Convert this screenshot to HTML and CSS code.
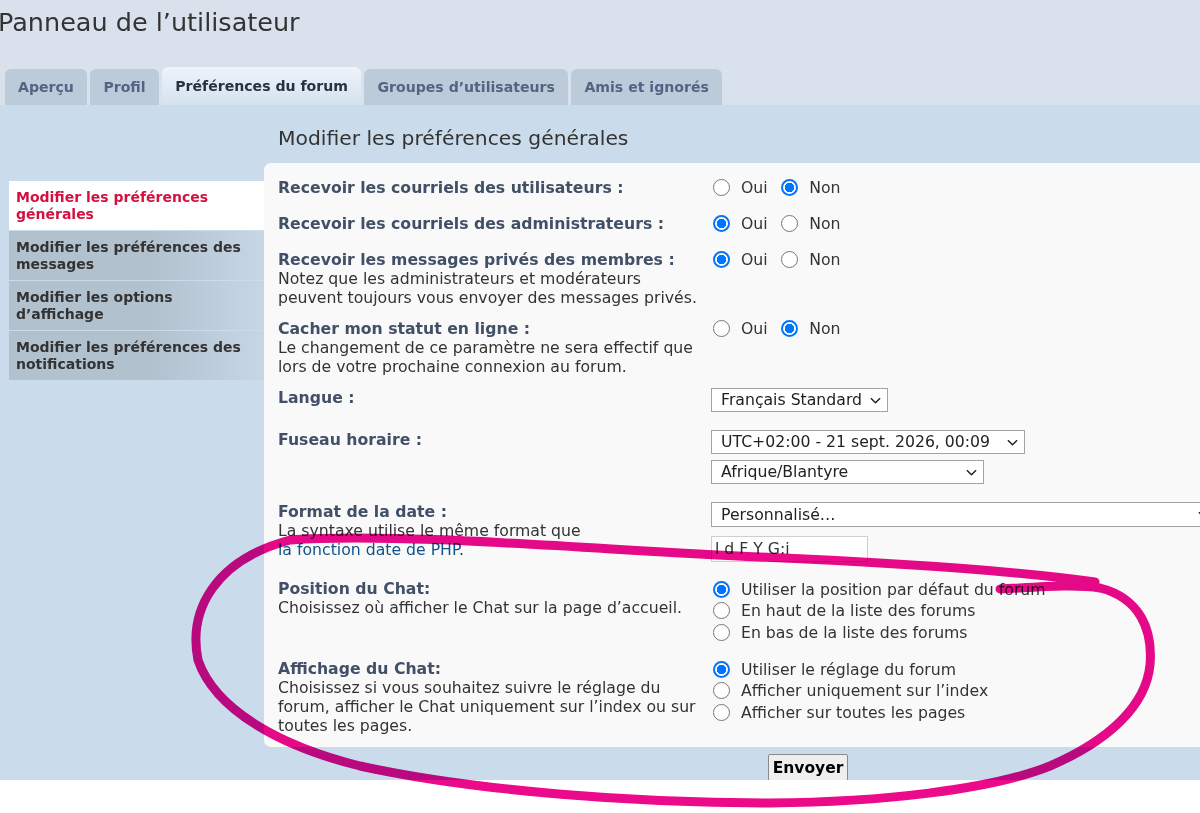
FILE: index.html
```html
<!DOCTYPE html>
<html lang="fr">
<head>
    <meta charset="UTF-8">
    <meta name="viewport" content="width=device-width, initial-scale=1.0">
    <title>Panneau de l’utilisateur</title>
    <link rel="stylesheet" href="styles.css">
</head>
<body>
    <div class="top">
        <h1 class="page-title">Panneau de l’utilisateur</h1>
        <ul class="tabs">
            <li class="tab">Aperçu</li>
            <li class="tab">Profil</li>
            <li class="tab active">Préférences du forum</li>
            <li class="tab">Groupes d’utilisateurs</li>
            <li class="tab">Amis et ignorés</li>
        </ul>
    </div>

    <div class="cp-main">
        <ul class="cp-menu">
            <li class="active"><a href="#">Modifier les préférences générales</a></li>
            <li><a href="#">Modifier les préférences des messages</a></li>
            <li><a href="#">Modifier les options d’affichage</a></li>
            <li><a href="#">Modifier les préférences des notifications</a></li>
        </ul>

        <div class="cp-content">
            <h2 class="cp-title">Modifier les préférences générales</h2>
            <form class="panel">
                <dl class="row">
                    <dt><label>Recevoir les courriels des utilisateurs :</label></dt>
                    <dd class="yesno">
                        <label class="opt"><input type="radio" name="viewemail"> Oui</label>
                        <label class="opt"><input type="radio" name="viewemail" checked> Non</label>
                    </dd>
                </dl>
                <dl class="row">
                    <dt><label>Recevoir les courriels des administrateurs :</label></dt>
                    <dd class="yesno">
                        <label class="opt"><input type="radio" name="massemail" checked> Oui</label>
                        <label class="opt"><input type="radio" name="massemail"> Non</label>
                    </dd>
                </dl>
                <dl class="row">
                    <dt><label>Recevoir les messages privés des membres :</label>
                        <span class="explain">Notez que les administrateurs et modérateurs peuvent toujours vous envoyer des messages privés.</span></dt>
                    <dd class="yesno">
                        <label class="opt"><input type="radio" name="allowpm" checked> Oui</label>
                        <label class="opt"><input type="radio" name="allowpm"> Non</label>
                    </dd>
                </dl>
                <dl class="row">
                    <dt><label>Cacher mon statut en ligne :</label>
                        <span class="explain">Le changement de ce paramètre ne sera effectif que lors de votre prochaine connexion au forum.</span></dt>
                    <dd class="yesno">
                        <label class="opt"><input type="radio" name="hideonline"> Oui</label>
                        <label class="opt"><input type="radio" name="hideonline" checked> Non</label>
                    </dd>
                </dl>
                <dl class="row">
                    <dt><label>Langue :</label></dt>
                    <dd class="controls">
                        <span class="select w-lang">
                            <select><option>Français Standard</option></select>
                            <svg class="chevron" viewBox="0 0 12 7"><path d="M1 1l5 5 5-5" fill="none" stroke="#222" stroke-width="1.6"/></svg>
                        </span>
                    </dd>
                </dl>
                <dl class="row">
                    <dt><label>Fuseau horaire :</label></dt>
                    <dd class="controls">
                        <span class="select w-tz">
                            <select><option>UTC+02:00 - 21 sept. 2026, 00:09</option></select>
                            <svg class="chevron" viewBox="0 0 12 7"><path d="M1 1l5 5 5-5" fill="none" stroke="#222" stroke-width="1.6"/></svg>
                        </span>
                        <span class="select w-zone">
                            <select><option>Afrique/Blantyre</option></select>
                            <svg class="chevron" viewBox="0 0 12 7"><path d="M1 1l5 5 5-5" fill="none" stroke="#222" stroke-width="1.6"/></svg>
                        </span>
                    </dd>
                </dl>
                <dl class="row">
                    <dt><label>Format de la date :</label>
                        <span class="explain">La syntaxe utilise le même format que<br><a href="#">la fonction date de PHP</a>.</span></dt>
                    <dd class="controls">
                        <span class="select w-date">
                            <select><option>Personnalisé…</option></select>
                            <svg class="chevron" viewBox="0 0 12 7"><path d="M1 1l5 5 5-5" fill="none" stroke="#222" stroke-width="1.6"/></svg>
                        </span>
                        <input class="text-input" type="text" value="l d F Y G:i">
                    </dd>
                </dl>
                <dl class="row">
                    <dt><label>Position du Chat:</label>
                        <span class="explain">Choisissez où afficher le Chat sur la page d’accueil.</span></dt>
                    <dd class="radios">
                        <label class="opt"><input type="radio" name="chatpos" checked> Utiliser la position par défaut du forum</label>
                        <label class="opt"><input type="radio" name="chatpos"> En haut de la liste des forums</label>
                        <label class="opt"><input type="radio" name="chatpos"> En bas de la liste des forums</label>
                    </dd>
                </dl>
                <dl class="row">
                    <dt><label>Affichage du Chat:</label>
                        <span class="explain">Choisissez si vous souhaitez suivre le réglage du forum, afficher le Chat uniquement sur l’index ou sur toutes les pages.</span></dt>
                    <dd class="radios">
                        <label class="opt"><input type="radio" name="chatview" checked> Utiliser le réglage du forum</label>
                        <label class="opt"><input type="radio" name="chatview"> Afficher uniquement sur l’index</label>
                        <label class="opt"><input type="radio" name="chatview"> Afficher sur toutes les pages</label>
                    </dd>
                </dl>
            </form>
            <div class="submit">
                <button type="button" class="button">Envoyer</button>
            </div>
        </div>
    </div>

    <!-- annotation tracee a la main par-dessus la capture -->
    <svg class="scribble" viewBox="0 0 1200 813">
        <path d="M1000 589 C1040 587 1075 584 1100 588 C1140 598 1153 630 1150 665 C1146 705 1110 740 1050 766 C990 790 880 802 770 803 C640 803 480 792 360 766 C280 746 215 710 198 660 C188 610 215 560 290 540 C400 532 600 550 760 557 C900 563 1010 570 1095 582" fill="none" stroke="#ea0a8a" stroke-width="9" stroke-linecap="round" stroke-linejoin="round"/>
    </svg>
</body>
</html>
```

FILE: styles.css
```css
body {
    margin: 0;
    position: relative;
    min-height: 813px;
    font-family: "DejaVu Sans", Verdana, sans-serif;
    font-size: 15.7px;
    color: #333;
    background-color: #ffffff;
}

/* en-tete + onglets */
.top {
    background-color: #d9e2ec;
    padding-top: 7px;
}
.page-title {
    margin: 0 0 0 -2px;
    font-size: 25.5px;
    font-weight: normal;
    line-height: 30px;
    color: #333;
}
.tabs {
    display: flex;
    align-items: flex-end;
    gap: 3.5px;
    list-style: none;
    margin: 30px 0 0;
    padding: 0 0 0 5px;
}
.tab {
    display: flex;
    align-items: center;
    height: 36px;
    padding: 0 13px;
    border-radius: 6px 6px 0 0;
    background-color: #bccbd9;
    font-size: 14.1px;
    font-weight: bold;
    color: #536482;
}
.tab.active {
    height: 38px;
    background: linear-gradient(#edf3fa, #d4e2ef);
    color: #28313f;
}

/* zone principale */
.cp-main {
    display: flex;
    height: 675px;
    overflow: hidden;
    background-color: #cadceb;
}
.cp-menu {
    flex: none;
    width: 255px;
    margin: 76px 0 0 9px;
    padding: 0;
    list-style: none;
}
.cp-menu li {
    margin-bottom: 1px;
}
.cp-menu a {
    display: block;
    padding: 7.5px 7px;
    line-height: 17px;
    font-size: 14px;
    font-weight: bold;
    color: #333;
    text-decoration: none;
    background: linear-gradient(to right, #b2c1ce 55%, #c6d6e5 100%);
}
.cp-menu .active a {
    background: #ffffff;
    color: #d31141;
}

.cp-content {
    flex: none;
    width: 1088px;
}
.cp-title {
    margin: 21px 0 13px 14px;
    font-size: 20.3px;
    font-weight: normal;
    line-height: 24px;
    color: #333;
}
.panel {
    margin: 0;
    padding: 14.5px 14px 12.5px;
    border-radius: 7px;
    background-color: #f9f9f9;
}

/* lignes du formulaire */
.row {
    display: flex;
    margin: 0 0 12px;
}
.row:last-child {
    margin-bottom: 0;
}
.row dt {
    flex: none;
    width: 425px;
    padding-right: 8px;
    line-height: 19px;
}
.row dt label {
    font-weight: bold;
    color: #425067;
}
.explain {
    display: block;
    color: #333;
}
.explain a {
    color: #105289;
    text-decoration: none;
}
.row dd {
    flex: 1;
    margin: 0;
}

.opt {
    display: flex;
    align-items: center;
    line-height: 19px;
    color: #333;
}
.yesno {
    display: flex;
    height: 24px;
}
.yesno .opt {
    height: 19px;
    margin-right: 11.5px;
}
.radios {
    padding-bottom: 3.5px;
}
.radios .opt {
    height: 21.5px;
}

input[type="radio"] {
    appearance: none;
    box-sizing: border-box;
    flex: none;
    width: 17px;
    height: 17px;
    margin: 0 11.5px 0 1.5px;
    border: 1.5px solid #767676;
    border-radius: 50%;
    background: #ffffff;
}
input[type="radio"]:checked {
    border: 2px solid #0075ff;
    background: radial-gradient(circle, #0075ff 4.5px, #ffffff 5px);
}

/* listes deroulantes */
.controls {
    display: flex;
    flex-direction: column;
    align-items: flex-start;
}
.select {
    position: relative;
    display: block;
    margin-bottom: 6px;
}
.select select {
    appearance: none;
    box-sizing: border-box;
    width: 100%;
    height: 24px;
    margin: 0;
    padding: 0 24px 0 9px;
    border: 1px solid #a3a3a3;
    border-radius: 0;
    background: #ffffff;
    font-family: "DejaVu Sans", Verdana, sans-serif;
    font-size: 15.7px;
    color: #222;
}
.chevron {
    position: absolute;
    right: 7px;
    top: 9px;
    width: 11px;
    height: 7px;
}
.w-lang { width: 177px; }
.w-tz { width: 314px; }
.w-zone { width: 273px; }
.w-date { width: 505px; }
.w-date select { height: 25px; }

.text-input {
    box-sizing: border-box;
    width: 157px;
    height: 26px;
    margin: 3px 0 5px;
    padding: 0 3px;
    border: 1px solid #cfcfcf;
    background: #ffffff;
    font-family: "DejaVu Sans", Verdana, sans-serif;
    font-size: 15.7px;
    color: #333;
}

/* bouton */
.submit {
    padding-top: 7px;
    text-align: center;
}
.button {
    width: 80px;
    height: 32px;
    padding: 0 0 4px;
    border: 1px solid #8a8a8a;
    border-radius: 2px;
    background-color: #efefef;
    font-family: "DejaVu Sans", Verdana, sans-serif;
    font-size: 15.5px;
    font-weight: bold;
    color: #000;
}

.scribble {
    position: absolute;
    left: 0;
    top: 0;
    width: 1200px;
    height: 813px;
    mix-blend-mode: multiply;
    pointer-events: none;
}
```
